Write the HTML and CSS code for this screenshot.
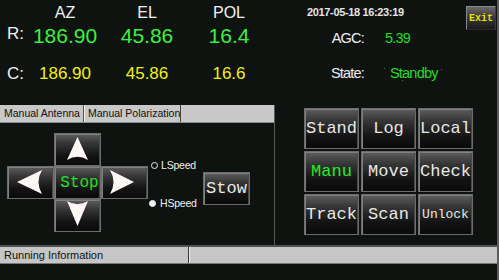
FILE: index.html
```html
<!DOCTYPE html>
<html>
<head>
<meta charset="utf-8">
<link rel="stylesheet" href="styles.css">
</head>
<body>
<div class="screen">
  <div class="top">
    <div class="readings">
      <span></span><span class="hdr">AZ</span><span class="hdr">EL</span><span class="hdr">POL</span>
      <span class="lbl">R:</span><span class="rv">186.90</span><span class="rv">45.86</span><span class="rv">16.4</span>
      <span class="lbl">C:</span><span class="cv">186.90</span><span class="cv">45.86</span><span class="cv">16.6</span>
    </div>
    <div class="status">
      <div class="status-head">
        <span class="time">2017-05-18 16:23:19</span>
        <button class="exit">Exit</button>
      </div>
      <div class="info">
        <span class="k">AGC:</span><span class="v">5.39</span>
        <span class="k row2">State:</span><span class="v row2"><span class="standby">Standby</span></span>
      </div>
    </div>
  </div>
  <div class="middle">
    <div class="manual">
      <div class="tabs">
        <div class="tab active">Manual Antenna</div>
        <div class="tab">Manual Polarization</div>
        <div class="tab-fill"></div>
      </div>
      <div class="manual-body">
        <div class="pad">
          <span></span>
          <button class="btn arrow"><svg viewBox="0 0 47 33"><path d="M23.5 4 L34 27 Q23.5 20.5 13 27 Z"/></svg></button>
          <span></span>
          <button class="btn arrow"><svg viewBox="0 0 47 33"><path d="M10 16 L35 4 Q28 16 35 28 Z"/></svg></button>
          <button class="btn stop">Stop</button>
          <button class="btn arrow"><svg viewBox="0 0 47 33"><path d="M33 16 L9 4 Q16 16 9 28 Z"/></svg></button>
          <span></span>
          <button class="btn arrow"><svg viewBox="0 0 47 33"><path d="M13 2 Q23.5 8.5 34 2 L23.5 27 Z"/></svg></button>
          <span></span>
        </div>
        <div class="speeds">
          <div class="speed"><span class="radio"></span>LSpeed</div>
          <div class="speed hs"><span class="radio on"></span>HSpeed</div>
        </div>
        <button class="btn stow">Stow</button>
      </div>
    </div>
    <div class="modes">
      <button class="btn mode">Stand</button>
      <button class="btn mode">Log</button>
      <button class="btn mode">Local</button>
      <button class="btn mode active">Manu</button>
      <button class="btn mode">Move</button>
      <button class="btn mode">Check</button>
      <button class="btn mode">Track</button>
      <button class="btn mode">Scan</button>
      <button class="btn mode small">Unlock</button>
    </div>
  </div>
  <div class="running">
    <div class="run-cell">Running Information</div>
    <div class="run-cell fill"></div>
  </div>
  <div class="bottom"></div>
</div>
</body>
</html>
```
FILE: styles.css
```css
* { box-sizing: border-box; }
html, body { margin: 0; padding: 0; background: #0e1310; }
.screen {
  width: 499px; height: 280px; overflow: hidden;
  background: #0e1310;
  border-right: 2px solid #5c5c5c;
  font-family: "Liberation Sans", Arial, sans-serif;
  color: #f0f0f0;
  display: flex; flex-direction: column;
}
.top { height: 105px; display: flex; }
.readings {
  width: 275px; padding-left: 7px;
  display: grid;
  grid-template-columns: 23px 70px 94px 70px;
  grid-template-rows: 26px 20px 56px;
}
.readings > span { justify-self: center; white-space: nowrap; }
.readings > .lbl { justify-self: start; font-size: 17px; color: #f2f2f2; }
.hdr { font-size: 16px; line-height: 26px; color: #f2f2f2; }
.lbl:nth-of-type(5) { line-height: 16px; }
.lbl:nth-of-type(9) { line-height: 56px; }
.rv { font-size: 21px; line-height: 20px; color: #3cf03c; }
.cv { font-size: 17px; line-height: 56px; color: #f4f00c; }

.status { flex: 1; display: flex; flex-direction: column; }
.status-head { display: flex; height: 30px; }
.time {
  margin: 6px 0 0 32px; font-size: 11px; line-height: 12px; font-weight: bold;
  letter-spacing: -0.35px; color: #e6e6e6;
}
.exit {
  margin: 6px 1px 0 auto; width: 30px; height: 24px; padding: 0;
  font-family: "Liberation Mono", monospace; font-weight: bold; font-size: 10px;
  color: #e8e000;
  background: linear-gradient(#6a6a6a, #3a3a3a 45%, #1a1a1a);
  border: 1px solid #8a8a8a; border-right-color: #3a3a3a; border-bottom-color: #2a2a2a;
}
.info {
  display: grid; grid-template-columns: 89px 1fr;
  font-size: 14.5px; line-height: 16px; letter-spacing: -0.8px;
}
.k { text-align: right; color: #f0f0f0; }
.v { padding-left: 21px; color: #22dd22; }
.row2 { margin-top: 19px; }
.standby { position: relative; margin-left: 5px; }
.standby::before, .standby::after {
  content: ""; position: absolute; width: 1px; height: 1px; background: #3a7a3a;
}
.standby::before { left: -6px; top: 3px; box-shadow: 18px 12px 0 #3a7a3a; }
.standby::after { right: -4px; top: 4px; }

.middle { height: 140px; display: flex; }
.manual { width: 275px; border-right: 1px solid #5a5a5a; display: flex; flex-direction: column; }
.tabs {
  height: 18px; display: flex; background: #c8c8c8;
  border-bottom: 1px solid #8a8a8a;
  font-size: 10.5px; line-height: 17px; color: #111;
}
.tab { padding-left: 4px; white-space: nowrap; overflow: hidden; }
.tab.active { width: 84px; border-right: 1px solid #555; }
.tab:nth-child(2) { width: 97px; padding-left: 3px; border-left: 1px solid #eee; border-right: 1px solid #444; }
.tab-fill { flex: 1; }
.manual-body { flex: 1; display: flex; align-items: flex-start; }

.btn {
  padding: 0; margin: 0;
  font-family: "Liberation Mono", monospace;
  color: #e8e8e8;
  background: linear-gradient(#5e5e5e 0%, #363636 30%, #131313 70%, #0a0a0a 100%);
  border: 1px solid #6c6c6c;
  box-shadow: inset 1px 1px 0 #808080, inset -1px 0 0 #4a4a4a;
  display: flex; align-items: center; justify-content: center;
  white-space: nowrap;
}
.pad {
  margin: 10px 0 0 7px;
  display: grid; grid-template-columns: 47px 47px 47px; grid-template-rows: 33px 33px 33px;
}
.arrow svg { width: 47px; height: 33px; margin: -1px; flex: none; overflow: visible; }
.arrow path { fill: #fff6f6; }
.stop { font-size: 16px; color: #22e022; padding-left: 4px; }
.speeds {
  width: 50px; margin: 36px 0 0 3px;
  display: flex; flex-direction: column; gap: 26px;
  font-size: 10.5px; line-height: 12px; color: #f0f0f0;
}
.speed { display: flex; align-items: center; gap: 3px; white-space: nowrap; letter-spacing: -0.2px; }
.speed.hs { margin-left: -2px; gap: 4px; }
.radio { width: 7px; height: 7px; border: 1.5px solid #f0f0f0; border-radius: 50%; }
.radio.on { background: #f0f0f0; }
.stow { width: 47px; height: 33px; margin: 49px 0 0 2px; font-size: 17px; }

.modes {
  flex: 1; padding: 3px 0 0 29px;
  display: grid; grid-template-columns: 55px 55px 55px; grid-template-rows: 41px 41px 41px;
  gap: 2px; align-content: start;
}
.mode { font-size: 17px; }
.mode.active { color: #22ee22; }
.mode.small { font-size: 13px; }

.running {
  height: 19px; display: flex;
  border-top: 2px solid #505050; border-bottom: 1px solid #777;
  background: #c6c6c6;
}
.run-cell { font-size: 11px; line-height: 16px; color: #111; padding-left: 4px; }
.run-cell:first-child { width: 189px; border-right: 1px solid #333; }
.run-cell.fill { flex: 1; border-left: 1px solid #eee; }
.bottom { flex: 1; }
```
